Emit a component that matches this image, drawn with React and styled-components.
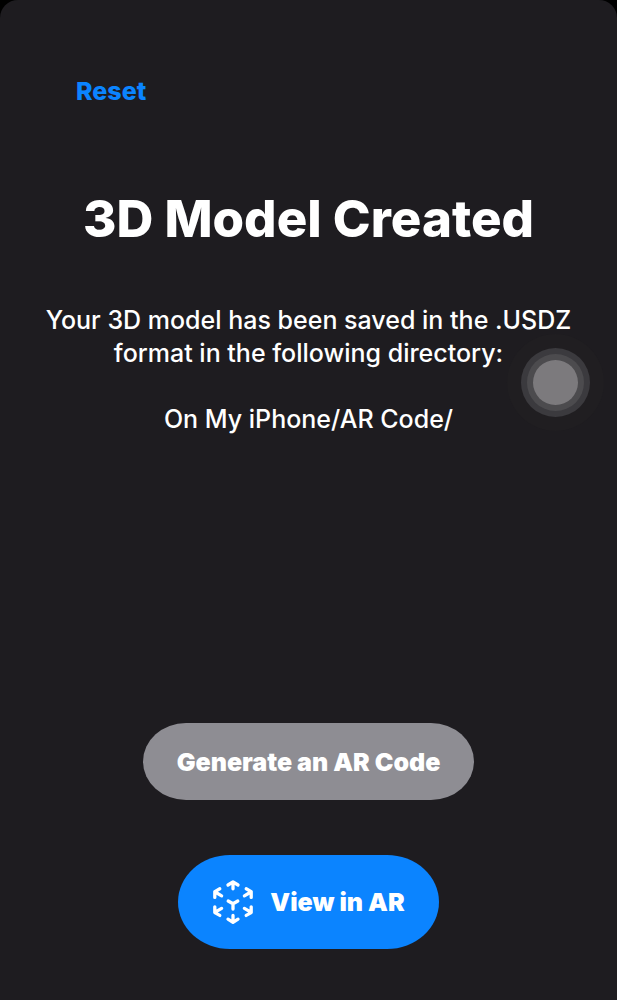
import styled, { createGlobalStyle } from "styled-components";

const GlobalStyle = createGlobalStyle`
  body {
    margin: 0;
    background-color: #000000;
  }
`;

const ArIcon = () => {
  return (
    <svg width="42" height="46" viewBox="0 0 42 46" fill="none" stroke="currentColor" strokeWidth="3.3" strokeLinecap="round" strokeLinejoin="round" aria-hidden="true">
      <path d="M16 6 L21 2.8 L26 6 M21 3.4 V9.8" />
      <path d="M7.8 9.8 L2.8 12.6 V18.4 M3.2 13 L9.6 16.8" />
      <path d="M34.2 9.8 L39.2 12.6 V18.4 M38.8 13 L32.4 16.8" />
      <path d="M2.8 27.8 V33.6 L7.8 36.4 M3.2 33.2 L9.6 29.4" />
      <path d="M39.2 27.8 V33.6 L34.2 36.4 M38.8 33.2 L32.4 29.4" />
      <path d="M16 40.2 L21 43.4 L26 40.2 M21 43 V36.4" />
      <path d="M16.2 22 L21 24.8 L25.8 22 M21 24.8 V30" />
    </svg>
  );
};

const App = () => {
  return (
    <>
      <GlobalStyle />
      <Screen>
        <TopBar>
          <ResetButton type="button">Reset</ResetButton>
        </TopBar>

        <Title>3D Model Created</Title>

        <Message>
          <p>Your 3D model has been saved in the .USDZ format in the following directory:</p>
          <p>On My iPhone/AR Code/</p>
        </Message>

        <Actions>
          <PillButton type="button">Generate an AR Code</PillButton>
          <PillButton type="button" $primary>
            <ArIcon />
            View in AR
          </PillButton>
        </Actions>

        <TouchButton type="button" aria-label="AssistiveTouch menu">
          <TouchRing>
            <TouchDot />
          </TouchRing>
        </TouchButton>
      </Screen>
    </>
  );
};

export default App;

const Screen = styled.main`
  position: relative;
  display: flex;
  flex-direction: column;
  align-items: center;
  box-sizing: border-box;
  min-height: 100vh;
  padding: 72px 40px 51px;
  border-radius: 18px 18px 0 0;
  background-color: #1e1c20;
  color: #ffffff;
  font-family: Inter, "Liberation Sans", sans-serif;
`;

const TopBar = styled.header`
  align-self: stretch;
  display: flex;
  padding: 0 36px;
`;

const ResetButton = styled.button`
  padding: 0;
  border: none;
  background: none;
  color: #0b84ff;
  font-family: inherit;
  font-size: 25px;
  font-weight: 800;
  line-height: 38px;
  cursor: pointer;
`;

const Title = styled.h1`
  margin: 78px 0 0;
  font-size: 51px;
  font-weight: 800;
  line-height: 62px;
  text-align: center;
`;

const Message = styled.section`
  display: flex;
  flex-direction: column;
  gap: 33px;
  margin-top: 54px;
  font-size: 25px;
  font-weight: 500;
  line-height: 33px;
  text-align: center;

  p {
    margin: 0;
  }
`;

const Actions = styled.div`
  display: flex;
  flex-direction: column;
  align-items: center;
  gap: 55px;
  margin-top: auto;
`;

const PillButton = styled.button`
  display: flex;
  align-items: center;
  gap: 16px;
  min-height: ${(props) => (props.$primary ? "94px" : "77px")};
  padding: 0 34px;
  border: none;
  border-radius: ${(props) => (props.$primary ? "52px / 50%" : "43px / 50%")};
  background-color: ${(props) => (props.$primary ? "#0b84ff" : "#8e8d93")};
  color: #ffffff;
  font-family: inherit;
  font-size: 25px;
  font-weight: 900;
  line-height: 32px;
  cursor: pointer;
`;

/* floats above the screen content */
const TouchButton = styled.button`
  position: absolute;
  top: 348px;
  right: 27px;
  display: flex;
  align-items: center;
  justify-content: center;
  width: 69px;
  height: 69px;
  padding: 0;
  border: none;
  border-radius: 50%;
  background-color: #3b3a3e;
  box-shadow: 0 0 0 14px rgba(34, 31, 33, 0.5);
  cursor: pointer;
`;

const TouchRing = styled.span`
  display: flex;
  align-items: center;
  justify-content: center;
  width: 57px;
  height: 57px;
  border-radius: 50%;
  background-color: #4c4b4e;
`;

const TouchDot = styled.span`
  width: 45px;
  height: 45px;
  border-radius: 50%;
  background-color: #7c7a7d;
`;
